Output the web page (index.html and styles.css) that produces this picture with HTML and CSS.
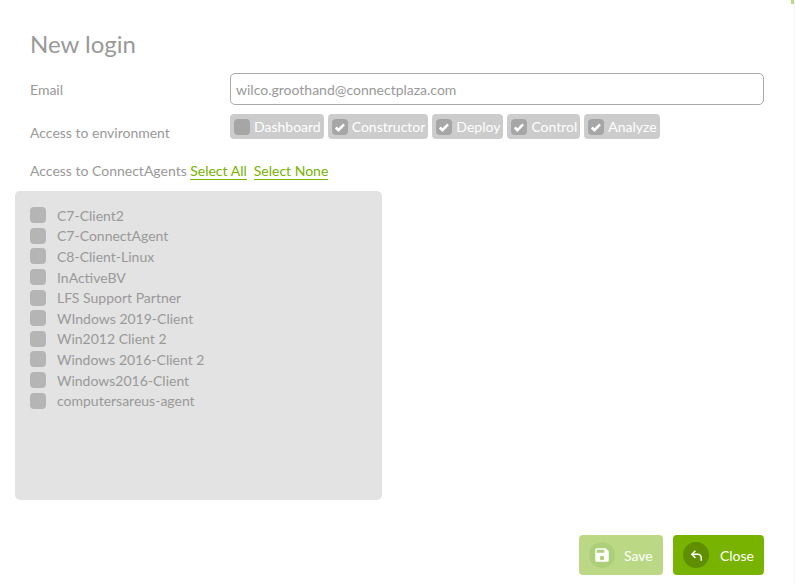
FILE: index.html
```
<!DOCTYPE html>
<html lang="en">
<head>
<meta charset="utf-8">
<title>New login</title>
<link rel="stylesheet" href="styles.css">
</head>
<body>
<span class="corner"></span>
<main class="dialog">
  <h1 class="title">New login</h1>
  <div class="row row-email">
    <label class="label" for="email">Email</label>
    <input class="input" id="email" type="text" value="wilco.groothand@connectplaza.com">
  </div>
  <div class="row row-env">
    <span class="label label-env">Access to environment</span>
    <div class="chips">
      <span class="chip"><i class="box"></i>Dashboard</span>
      <span class="chip"><i class="box"><svg viewBox="0 0 16 16" class="tick"><path d="M3.2 8.6l3 3 6.4-6.6" /></svg></i>Constructor</span>
      <span class="chip"><i class="box"><svg viewBox="0 0 16 16" class="tick"><path d="M3.2 8.6l3 3 6.4-6.6" /></svg></i>Deploy</span>
      <span class="chip"><i class="box"><svg viewBox="0 0 16 16" class="tick"><path d="M3.2 8.6l3 3 6.4-6.6" /></svg></i>Control</span>
      <span class="chip"><i class="box"><svg viewBox="0 0 16 16" class="tick"><path d="M3.2 8.6l3 3 6.4-6.6" /></svg></i>Analyze</span>
    </div>
  </div>
  <div class="agents-head">
    <span class="label">Access to ConnectAgents</span>
    <a class="link" href="#">Select All</a>
    <a class="link" href="#">Select None</a>
  </div>
  <ul class="agents">
    <li class="agent"><i class="box box-agent"></i>C7-Client2</li>
    <li class="agent"><i class="box box-agent"></i>C7-ConnectAgent</li>
    <li class="agent"><i class="box box-agent"></i>C8-Client-Linux</li>
    <li class="agent"><i class="box box-agent"></i>InActiveBV</li>
    <li class="agent"><i class="box box-agent"></i>LFS Support Partner</li>
    <li class="agent"><i class="box box-agent"></i>WIndows 2019-Client</li>
    <li class="agent"><i class="box box-agent"></i>Win2012 Client 2</li>
    <li class="agent"><i class="box box-agent"></i>Windows 2016-Client 2</li>
    <li class="agent"><i class="box box-agent"></i>Windows2016-Client</li>
    <li class="agent"><i class="box box-agent"></i>computersareus-agent</li>
  </ul>
  <div class="actions">
    <button class="btn btn-save" type="button">
      <span class="btn-icon"><svg viewBox="0 0 24 24" class="ico"><path fill="#fff" d="M17 3H5a2 2 0 0 0-2 2v14a2 2 0 0 0 2 2h14a2 2 0 0 0 2-2V7l-4-4zm-5 16a3 3 0 1 1 0-6 3 3 0 0 1 0 6zm3-10H5V5h10v4z"/></svg></span>Save
    </button>
    <button class="btn btn-close" type="button">
      <span class="btn-icon"><svg viewBox="0 0 24 24" class="ico"><path fill="#fff" d="M20 19.5h-2v-4a3.5 3.5 0 0 0-3.5-3.5H8.8l3.1 3.1-1.4 1.4L5 11l5.5-5.5 1.4 1.4L8.8 10h5.7a5.5 5.5 0 0 1 5.5 5.5z"/></svg></span>Close
    </button>
  </div>
</main>
</body>
</html>
```
FILE: styles.css
```
* { box-sizing: border-box; }
html, body { margin: 0; height: 100%; }
body {
  position: relative;
  background: #fff;
  font-family: Lato, "Open Sans", sans-serif;
  font-size: 14px;
  color: #999;
  overflow: hidden;
  border-right: 1px solid #f4f4f4;
}
.corner {
  position: absolute;
  top: 0;
  right: -1px;
  width: 4px;
  height: 4px;
  background: #bcd98a;
}
.dialog { padding: 29px 30px 0 15px; }
.title {
  margin: 0 0 15px 15px;
  font-size: 24px;
  font-weight: 400;
  line-height: 29px;
  color: #999;
}
.row { display: flex; }
.label { color: #999; line-height: 17px; }
.row-email { align-items: center; margin-left: 15px; height: 32px; }
.row-email .label { width: 200px; }
.input {
  flex: 1;
  height: 32px;
  padding: 0 5px;
  border: 1px solid #aaa;
  border-radius: 5px;
  background: #fff;
  color: #999;
  font: 14px Lato, sans-serif;
  outline: none;
}
.row-env { margin: 9px 0 0 15px; }
.label-env { width: 200px; padding-top: 10px; }
.chips { display: flex; gap: 4px; }
.chip {
  display: flex;
  align-items: center;
  height: 25px;
  padding: 0 3px 0 4px;
  background: #ccc;
  border-radius: 4px;
  color: #fff;
}
.box {
  display: flex;
  align-items: center;
  justify-content: center;
  width: 16px;
  height: 16px;
  margin-right: 4px;
  background: #a6a6a6;
  border-radius: 4px;
}
.tick { width: 14px; height: 14px; fill: none; stroke: #fff; stroke-width: 3; }
.agents-head { margin: 21px 0 0 15px; display: flex; gap: 7px; height: 19px; line-height: 17px; }
.agents-head .label { margin-right: -3.5px; }
.link { color: #77b300; text-decoration: none; border-bottom: 1px solid #77b300; height: 18px; }
.agents {
  list-style: none;
  margin: 10px 0 0;
  padding: 14px 15px 0;
  width: 367px;
  height: 309px;
  background: #e3e3e3;
  border-radius: 5px;
}
.agent { display: flex; align-items: center; height: 20.6px; }
.box-agent { margin-right: 11px; background: #b5b5b5; }
.actions { display: flex; justify-content: flex-end; align-items: center; gap: 10px; margin-top: 35px; }
.btn {
  display: flex;
  align-items: center;
  padding: 0 10px;
  border: 0;
  border-radius: 4px;
  color: #fff;
  font: 14px Lato, sans-serif;
}
.btn-icon {
  display: flex;
  align-items: center;
  justify-content: center;
  width: 26px;
  height: 26px;
  border-radius: 50%;
  margin-right: 11px;
}
.ico { width: 18px; height: 18px; }
.btn-save { width: 84px; height: 40px; background: #bbd985; }
.btn-save .btn-icon { background: #aecf7a; margin-right: 9px; }
.btn-close { width: 91px; height: 40px; background: #77b300; }
.btn-close .btn-icon { background: #5f8f00; }
```
